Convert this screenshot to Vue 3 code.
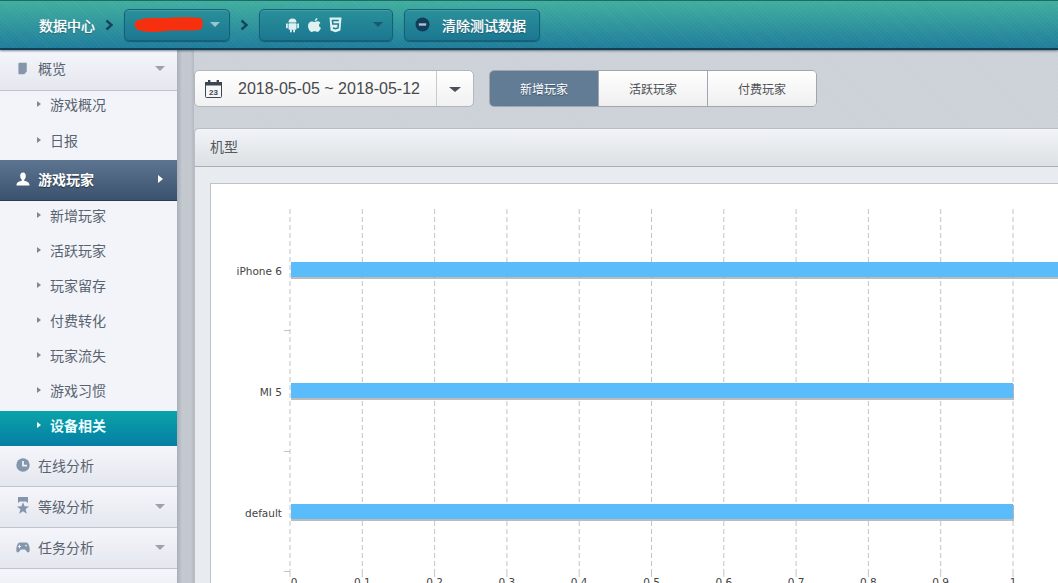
<script setup>
const gridX = Array.from({ length: 11 }, (_, i) => 290 + i * 72.3)
const axisLabels = ['0', '0.1', '0.2', '0.3', '0.4', '0.5', '0.6', '0.7', '0.8', '0.9', '1']
const bars = [
  { label: 'iPhone 6', y: 262, w: 790 },
  { label: 'MI 5', y: 383, w: 722 },
  { label: 'default', y: 504, w: 722 },
]
const ticks = [330, 451, 571]
const subA = ['游戏概况', '日报']
const subB = ['新增玩家', '活跃玩家', '玩家留存', '付费转化', '玩家流失', '游戏习惯']
</script>

<template>
  <div class="page">
    <header class="top">
      <span class="crumb">数据中心</span>
      <svg class="chev" width="9" height="12" viewBox="0 0 9 12"><path d="M1.5 1.5 L6.5 6 L1.5 10.5" fill="none" stroke="#12465f" stroke-width="2.4"/></svg>
      <div class="tbtn game">
        <svg class="blot" width="70" height="17" viewBox="0 0 70 17"><path d="M2 5 C10 1 20 2 32 2 C44 1 58 1 67 2 C70 5 69 12 66 14 C54 15 42 14 32 15 C20 17 10 16 4 14 C0 12 0 7 2 5Z" fill="#f6300f"/></svg>
        <i class="caret light"></i>
      </div>
      <svg class="chev" width="9" height="12" viewBox="0 0 9 12"><path d="M1.5 1.5 L6.5 6 L1.5 10.5" fill="none" stroke="#12465f" stroke-width="2.4"/></svg>
      <div class="tbtn plat">
        <svg width="15" height="16" viewBox="0 0 15 16" fill="#dff1f1"><path d="M3.5 5.6 A4 4 0 0 1 11.5 5.6Z"/><rect x="3.5" y="6.3" width="8" height="6.5" rx="1"/><rect x="1" y="6.3" width="1.8" height="5" rx=".9"/><rect x="12.2" y="6.3" width="1.8" height="5" rx=".9"/><rect x="5" y="12" width="1.8" height="3.4" rx=".9"/><rect x="8.2" y="12" width="1.8" height="3.4" rx=".9"/></svg>
        <svg width="15" height="16" viewBox="0 0 15 16" fill="#dff1f1"><path d="M10.4 1 C10.5 2.8 9.2 4 7.7 4 C7.6 2.5 9 1.2 10.4 1Z"/><path d="M7.6 5 C8.6 5 9.4 4.3 10.6 4.3 C11.8 4.3 12.8 5 13.4 5.9 C11.4 7.1 11.7 9.9 14 10.8 C13.3 12.7 11.9 15 10.5 15 C9.4 15 9 14.3 7.7 14.3 C6.3 14.3 5.8 15 4.8 15 C3 15 1 11.6 1 8.8 C1 6 2.9 4.4 4.7 4.4 C5.9 4.4 6.8 5 7.6 5Z"/></svg>
        <svg width="13" height="16" viewBox="0 0 13 16"><path fill="#dff1f1" d="M0.5 0.5 H12.5 L11.4 13.4 L6.5 15.2 L1.6 13.4Z"/><path fill="none" stroke="#1e7f94" stroke-width="1.5" d="M9.8 3.5 H3.5 L3.8 7 H9.4 L9 11 L6.5 11.8 L4 11"/></svg>
        <i class="caret dark push"></i>
      </div>
      <div class="tbtn clear">
        <svg width="15" height="15" viewBox="0 0 15 15"><circle cx="7.5" cy="7.5" r="7" fill="#123d5c"/><rect x="3.8" y="6.3" width="7.4" height="2.4" fill="#a9c6cf"/></svg>
        <span>清除测试数据</span>
      </div>
    </header>

    <div class="body">
      <aside class="side">
        <div class="group first">
          <svg class="gi doc" width="10" height="15" viewBox="0 0 12 15"><path d="M1.5 0.5 H10.5 V11 L7.5 14.5 H1.5 A1 1 0 0 1 .5 13.5 V1.500 A1 1 0 0 1 1.5 .5Z" fill="#8496ab"/></svg>
          <span>概览</span><i class="caret gray push"></i>
        </div>
        <div class="subs">
          <div v-for="s in subA" :key="s" class="sub"><i class="tri"></i>{{ s }}</div>
        </div>
        <div class="group current">
          <svg class="gi" width="15" height="14" viewBox="0 0 15 14" fill="#fff"><path d="M7.5 0 C9.6 0 10.6 1.6 10.5 3.8 C10.4 5.6 9.8 7 8.8 7.8 V9 C11 9.6 14.5 10.4 14.5 14 H.5 C.5 10.4 4 9.6 6.2 9 V7.8 C5.2 7 4.6 5.6 4.5 3.8 C4.4 1.6 5.4 0 7.5 0Z"/></svg>
          <span>游戏玩家</span><i class="arrow push"></i>
        </div>
        <div class="subs tight">
          <div v-for="s in subB" :key="s" class="sub"><i class="tri"></i>{{ s }}</div>
          <div class="sub on"><i class="tri"></i>设备相关</div>
        </div>
        <div class="group">
          <svg class="gi" width="14" height="14" viewBox="0 0 14 14"><circle cx="7" cy="7" r="6.7" fill="#8496ab"/><path d="M7 3 V7.6 H11" fill="none" stroke="#eef1f6" stroke-width="1.8"/></svg>
          <span>在线分析</span>
        </div>
        <div class="group">
          <svg class="gi" width="14" height="18" viewBox="0 0 14 18" fill="#8496ab"><path d="M2 0 H12 V6 L10 4.4 H4 L2 6Z"/><path d="M7 5.2 L8.6 9.2 L13 9.5 L9.6 12.2 L10.8 16.8 L7 14.2 L3.2 16.8 L4.4 12.2 L1 9.5 L5.4 9.2Z"/></svg>
          <span>等级分析</span><i class="caret gray push"></i>
        </div>
        <div class="group">
          <svg class="gi" width="14" height="11" viewBox="0 0 14 11" fill="#8496ab"><path fill-rule="evenodd" d="M4 0.5 H10 C12 .5 13 2.5 13.6 6 C14 8.8 13.4 10.5 12.2 10.5 C10.8 10.5 10 8.2 9 7.6 H5 C4 8.2 3.2 10.5 1.8 10.5 C.6 10.5 0 8.8 .4 6 C1 2.5 2 .5 4 .5Z M3 2.8 V4 H1.9 V5 H3 V6.2 H4 V5 H5.1 V4 H4 V2.8Z M10 2.7 a.8 .8 0 1 0 .01 0Z"/></svg>
          <span>任务分析</span><i class="caret gray push"></i>
        </div>
        <div class="group last">
          <svg class="gi" width="14" height="11" viewBox="0 0 14 11" fill="#8496ab"><circle cx="3.5" cy="3" r="2.5"/><circle cx="10.5" cy="3" r="2.5"/></svg>
          <span>收入分析</span>
        </div>
      </aside>
      <div class="gutter"></div>

      <main class="main">
        <div class="tools">
          <div class="date">
            <div class="date-val">
              <svg width="17" height="18" viewBox="0 0 17 18"><rect x=".5" y="2.5" width="16" height="15" rx="1" fill="#f7f7f7" stroke="#3a4654"/><rect x="0" y="2" width="17" height="3.500" fill="#3a4654"/><rect x="3" y="0" width="2.4" height="4" fill="#3a4654"/><rect x="11.6" y="0" width="2.4" height="4" fill="#3a4654"/><text x="8.5" y="15" class="cal">23</text></svg>
              <span>2018-05-05 ~ 2018-05-12</span>
            </div>
            <div class="date-drop"><i class="caret date-caret"></i></div>
          </div>
          <div class="tabs">
            <div class="tab active">新增玩家</div>
            <div class="tab">活跃玩家</div>
            <div class="tab">付费玩家</div>
          </div>
        </div>

        <section class="panel">
          <div class="panel-head">机型</div>
          <div class="panel-body">
            <svg class="chart" width="864" height="400" viewBox="211 184 864 400">
              <line v-for="x in gridX" :key="x" :x1="x" :x2="x" y1="209" y2="571" stroke="#c4c4c4" stroke-dasharray="5 3"/>
              <line v-for="t in ticks" :key="t" x1="284" x2="290" :y1="t + .5" :y2="t + .5" stroke="#c4c4c4"/>
              <line v-for="x in gridX" :key="'t' + x" :x1="x" :x2="x" y1="571" y2="577" stroke="#c4c4c4"/>
              <g v-for="b in bars" :key="b.label">
                <rect x="291" :y="b.y + 1" :width="b.w + 1" height="16" fill="#8f8f8f" opacity=".6"/>
                <rect x="291" :y="b.y" :width="b.w" height="15" fill="#5bbcfb"/>
                <text x="282" :y="b.y + 13" text-anchor="end" class="lab">{{ b.label }}</text>
              </g>
              <text v-for="(l, i) in axisLabels" :key="l" :x="i === 0 ? 294 : gridX[i]" y="586" text-anchor="middle" class="lab">{{ l }}</text>
            </svg>
          </div>
        </section>
      </main>
    </div>
  </div>
</template>

<style>
html, body { margin: 0; overflow: hidden; background: #cdd1d8; }
</style>

<style scoped>
.page {
  width: 1058px;
  height: 583px;
  overflow: hidden;
  display: flex;
  flex-direction: column;
  font-family: "Liberation Sans", "Noto Sans CJK SC", sans-serif;
  background-color: #cdd1d8;
}
.top {
  height: 50px;
  flex: none;
  box-sizing: border-box;
  display: flex;
  align-items: center;
  padding-left: 39px;
  border-top: 1px solid #1d6a6a;
  border-bottom: 2px solid #123f55;
  background:
    repeating-linear-gradient(45deg, rgba(255,255,255,.035) 0 1px, transparent 1px 3px),
    linear-gradient(#40ae9e, #1f7d9c);
  box-shadow: 0 1px 2px rgba(30,50,70,.55);
  position: relative;
  z-index: 2;
}
.crumb { color: #fff; font-size: 14px; width: 56px; white-space: nowrap; text-shadow: 0 0 1px #fff, 0 1px 1px rgba(0,50,60,.6); }
.chev { margin: 0 10px; flex: none; }
.tbtn {
  box-sizing: border-box;
  height: 32px;
  display: flex;
  align-items: center;
  border: 1px solid #15607a;
  border-radius: 5px;
  background: linear-gradient(#2a9099, #1b7792);
  box-shadow: inset 0 1px 0 rgba(255,255,255,.12), 0 1px 1px rgba(10,50,70,.5);
}
.game { width: 106px; padding-left: 9px; }
.blot { flex: none; }
.plat { width: 134px; padding-left: 25px; gap: 7px; }
.clear { width: 136px; padding-left: 10px; margin-left: 11px; gap: 12px; color: #fff; font-size: 14px; white-space: nowrap; text-shadow: 0 0 1px #fff, 0 1px 1px rgba(0,50,60,.7); }
.caret { display: block; width: 0; height: 0; border-style: solid; border-width: 5px 5px 0; border-color: #8496ab transparent transparent; }
.light { border-top-color: #9cc4cf; margin-left: 6px; }
.dark { border-top-color: #155a72; }
.gray { border-top-color: #98a3b1; }
.push { margin-left: auto; }
.plat .push { margin-right: 9px; }

.body { flex: 1; display: flex; min-height: 0; }
.side {
  width: 177px;
  flex: none;
  background: #f2f4fa;
  color: #59636f;
  font-size: 14px;
  overflow: hidden;
}
.group {
  box-sizing: border-box;
  height: 41px;
  display: flex;
  align-items: center;
  padding: 0 12px 2px 16px;
  background: linear-gradient(#f5f6fb, #e4e7ee);
  border-bottom: 1px solid #bfc5cf;
}
.group.first { align-items: flex-start; padding-top: 8px; }
.group.first .caret { margin-top: 8px; }
.group span { margin-left: 8px; white-space: nowrap; }
.group .gi { width: 14px; flex: none; }
.group .doc { width: 10px; margin: 3px 2px 0; }
.current {
  background: linear-gradient(#5d7590, #3b526f);
  border-bottom: 1px solid #2a3a55;
  color: #fff;
  font-weight: 700;
  text-shadow: 0 1px 1px rgba(0,0,0,.5);
}
.arrow { display: block; width: 0; height: 0; border-style: solid; border-width: 4.500px 0 4.500px 5px; border-color: transparent transparent transparent #fff; margin-right: 2px; }
.subs { display: flex; flex-direction: column; height: 69px; }
.subs.tight { height: 245px; }
.sub {
  box-sizing: border-box;
  height: 36px;
  padding-bottom: 10px;
  flex: none;
  display: flex;
  align-items: center;
  padding-left: 37px;
  white-space: nowrap;
}
.tight .sub { height: 35px; padding-bottom: 8px; }
.tri { display: block; width: 0; height: 0; margin-right: 9px; border-style: solid; border-width: 3px 0 3px 4px; border-color: transparent transparent transparent #7d8894; }
.sub.on {
  background: linear-gradient(#0aa3a8, #067ea5);
  color: #eaffff;
  font-weight: 700;
}
.sub.on .tri { border-left-color: #fff; }
.last { border-bottom: 0; }

.gutter {
  width: 17px;
  flex: none;
  background: linear-gradient(90deg, #a9afb9, #c4c8cf 30%, #c4c8cf 80%, #b4b9c1);
}
.main {
  flex: 1;
  min-width: 0;
  display: flex;
  flex-direction: column;
  padding-top: 20px;
  background: repeating-linear-gradient(45deg, rgba(255,255,255,.04) 0 1px, transparent 1px 3px);
}
.tools { display: flex; height: 37px; flex: none; }
.date {
  box-sizing: border-box;
  width: 280px;
  display: flex;
  background: linear-gradient(#fff, #f1f1f1);
  border: 1px solid #b3b7bd;
  border-radius: 5px;
}
.date-val {
  flex: 1;
  display: flex;
  align-items: center;
  gap: 16px;
  padding-left: 10px;
  color: #47494c;
  font-size: 16px;
  white-space: nowrap;
  border-right: 1px solid #c8cacd;
}
.date-drop { width: 36px; display: flex; align-items: center; justify-content: center; }
.date-caret { border-width: 5px 6px 0; border-top-color: #4a5057; margin-top: 2px; }
.cal { font: 700 8px "Liberation Sans", sans-serif; fill: #3a4654; text-anchor: middle; }
.tabs {
  box-sizing: border-box;
  width: 328px;
  margin-left: 15px;
  display: flex;
  border: 1px solid #a1a6ae;
  border-radius: 5px;
  overflow: hidden;
}
.tab {
  flex: 1;
  display: flex;
  align-items: center;
  justify-content: center;
  font-size: 12px;
  color: #4e5156;
  background: linear-gradient(#fff, #efefef);
  border-left: 1px solid #a1a6ae;
}
.tab.active {
  border-left: 0;
  background: #627c96;
  color: #fff;
  text-shadow: 0 1px 1px rgba(30,50,70,.6);
}
.panel {
  margin-top: 21px;
  flex: 1;
  min-height: 0;
  margin-right: -6px;
  border: 1px solid #b9bec5;
  border-right: 0;
  border-bottom: 0;
  border-radius: 5px 0 0 0;
  background: #e8ecf0;
  display: flex;
  flex-direction: column;
}
.panel-head {
  height: 38px;
  flex: none;
  box-sizing: border-box;
  padding: 0 0 3px 15px;
  display: flex;
  align-items: center;
  font-size: 14px;
  color: #55595e;
  background: linear-gradient(#f1f3f7, #dce1e4);
  border-bottom: 1px solid #a9aeb2;
  border-radius: 5px 0 0 0;
}
.panel-body { padding: 17px 0 0 16px; flex: 1; min-height: 0; }
.chart { display: block; background: #fff; outline: 1px solid #bfc3c8; }
.lab { font: 10.5px "DejaVu Sans", sans-serif; fill: #444; }
</style>
